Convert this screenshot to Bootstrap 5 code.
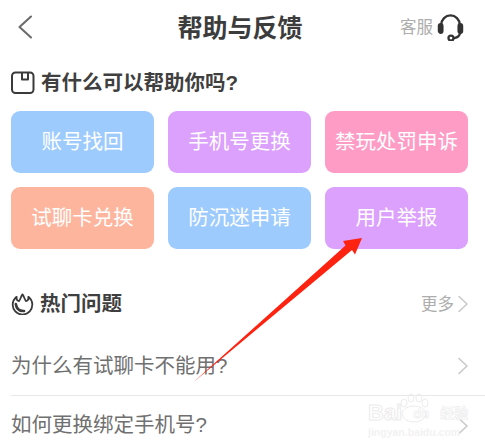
<!DOCTYPE html>
<html lang="zh">
<head>
    <meta charset="UTF-8">
    <title>帮助与反馈</title>
    <link href="https://cdn.jsdelivr.net/npm/bootstrap@5.3.0/dist/css/bootstrap.min.css" rel="stylesheet">
    <style>
        html, body { height: 445px; overflow: hidden; background: #fff; }
        body { font-family: "Liberation Sans", "Noto Sans CJK SC", sans-serif; color: #333; position: relative; }
        .top-bar { height: 57px; padding: 0 21px 3px 17px; position: relative; }
        .top-title { position: absolute; left: 0; right: 5px; top: 13px; text-align: center; font-size: 25px; line-height: 30px; font-weight: 700; color: #3c3c3c; }
        .kefu { font-size: 16.5px; color: #adadad; line-height: 20px; }
        .sec-head { font-size: 20.5px; line-height: 28px; font-weight: 700; color: #3f3f3f; padding-left: 11px; gap: 6px; }
        .tile-grid { display: grid; grid-template-columns: repeat(3, 143px); gap: 14px; padding: 0 0 0 11px; margin-top: 14px; }
        .tile { height: 62px; border-radius: 9px; color: #fff; font-size: 20.5px; padding: 0; border: 0; }
        .tile-blue { background: #9dcbfe; }
        .tile-violet { background: #dca0fd; }
        .tile-pink { background: #fe9cc6; }
        .tile-orange { background: #feb59e; }
        .hot-head { margin-top: 41px; padding-right: 17px; }
        .more-link { font-size: 16.5px; line-height: 20px; color: #adadad; font-weight: 400; }
        .faq-row { height: 59px; margin-left: 11px; padding-right: 17px; font-size: 20.5px; color: #707070; }
        .faq-first { margin-top: 19px; border-bottom: 1px solid #e8e8e8; }
        .overlay { position: absolute; left: 0; top: 0; pointer-events: none; }
        .wm { position: absolute; left: 368px; top: 402px; pointer-events: none; line-height: 1; white-space: nowrap; }
        .wm-big { font-size: 22px; font-weight: 700; color: #fff; -webkit-text-stroke: 1px #ececec; gap: 3px; }
        .wm-du { font-size: 13px; -webkit-text-stroke: .6px #ececec; }
        .wm-cn { font-size: 14px; -webkit-text-stroke: .6px #ececec; }
        .wm-small { font-size: 10.5px; font-weight: 700; color: #f2f2f2; margin-top: 3px; }
    </style>
</head>
<body>
    <div class="top-bar d-flex align-items-center justify-content-between">
        <svg width="16" height="24" viewBox="0 0 16 24" fill="none" stroke="#6b6b6b" stroke-width="2.1" stroke-linecap="round" stroke-linejoin="round"><path d="M14 1.5 L2.5 12 L14 22.5"/></svg>
        <div class="top-title">帮助与反馈</div>
        <div class="d-flex align-items-center gap-1">
            <span class="kefu">客服</span>
            <svg width="27" height="27" viewBox="0 0 28 28" fill="none" stroke="#333" stroke-width="2.4" stroke-linecap="round"><path d="M4.5 13 V11 A9.5 9.5 0 0 1 23.5 11 V13"/><rect x="2" y="10.5" width="3.6" height="9" rx="1.8" fill="#333"/><rect x="22.4" y="10.5" width="3.6" height="9" rx="1.8" fill="#333"/><path d="M24 19.5 C23.5 22.5 21 24.5 18 25"/><circle cx="14.5" cy="25" r="2.6"/></svg>
        </div>
    </div>

    <div class="sec-head d-flex align-items-center mt-2 pt-1">
        <svg width="24" height="24" viewBox="0 0 24 24" fill="none" stroke="#3a3a3a" stroke-width="2"><rect x="1" y="1.5" width="21.5" height="20.5" rx="3.5"/><path d="M11 2 V8.5 H17 V2" stroke-linejoin="round"/></svg>
        <span>有什么可以帮助你吗?</span>
    </div>

    <div class="tile-grid">
        <button type="button" class="btn tile tile-blue">账号找回</button>
        <button type="button" class="btn tile tile-violet">手机号更换</button>
        <button type="button" class="btn tile tile-pink">禁玩处罚申诉</button>
        <button type="button" class="btn tile tile-orange">试聊卡兑换</button>
        <button type="button" class="btn tile tile-blue">防沉迷申请</button>
        <button type="button" class="btn tile tile-violet">用户举报</button>
    </div>

    <div class="hot-head d-flex align-items-center justify-content-between">
        <div class="sec-head d-flex align-items-center">
            <svg width="23" height="22" viewBox="0 0 23 22" fill="none" stroke="#3a3a3a" stroke-width="1.8" stroke-linejoin="round" stroke-linecap="round"><path d="M5.5 4 A9.8 9.8 0 1 0 17.5 4"/><path d="M5.5 4 C5.5 6.5 6.5 8 8 8 C9.5 6.5 10 3 11.5 1.5 C13 3 13.5 6.5 15 8 C16.5 8 17.5 6.5 17.5 4"/><path d="M4.8 11 C5.5 16 9 18.2 13 18" stroke-width="2.6"/></svg>
            <span>热门问题</span>
        </div>
        <div class="d-flex align-items-center gap-1 more-link">
            <span>更多</span>
            <svg width="10" height="18" viewBox="0 0 10 18" fill="none" stroke="#c8c8c8" stroke-width="1.5" stroke-linecap="round" stroke-linejoin="round"><path d="M1 1.5 L9 9 L1 16.5"/></svg>
        </div>
    </div>

    <div class="faq-row faq-first d-flex align-items-center justify-content-between">
        <span>为什么有试聊卡不能用?</span>
        <svg width="10" height="18" viewBox="0 0 10 18" fill="none" stroke="#c8c8c8" stroke-width="1.5" stroke-linecap="round" stroke-linejoin="round"><path d="M1 1.5 L9 9 L1 16.5"/></svg>
    </div>
    <div class="faq-row d-flex align-items-center justify-content-between">
        <span>如何更换绑定手机号?</span>
        <svg width="10" height="18" viewBox="0 0 10 18" fill="none" stroke="#c8c8c8" stroke-width="1.5" stroke-linecap="round" stroke-linejoin="round"><path d="M1 1.5 L9 9 L1 16.5"/></svg>
    </div>

    <!-- paw behind the watermark text -->
    <svg class="overlay" width="485" height="445" viewBox="0 0 485 445" fill="none" stroke="#ececec" stroke-width="1"><ellipse cx="404" cy="403" rx="3" ry="4"/><ellipse cx="411" cy="398" rx="3" ry="4"/><ellipse cx="419" cy="398" rx="3" ry="4"/><ellipse cx="425" cy="403" rx="3" ry="4"/><ellipse cx="414" cy="414" rx="12" ry="8"/></svg>
    <div class="wm">
        <div class="wm-big d-flex align-items-center">
            <span>Bai</span><span class="wm-du ms-2">du</span><span class="wm-cn ms-2">经验</span>
        </div>
        <div class="wm-small">jingyan.baidu.com</div>
    </div>

    <svg class="overlay" width="485" height="445" viewBox="0 0 485 445"><path d="M193 382.5 L345.5 245.5 L343 241 L362 238 L355 254.5 L352 250 Z" fill="#fe2211"/></svg>
</body>
</html>
